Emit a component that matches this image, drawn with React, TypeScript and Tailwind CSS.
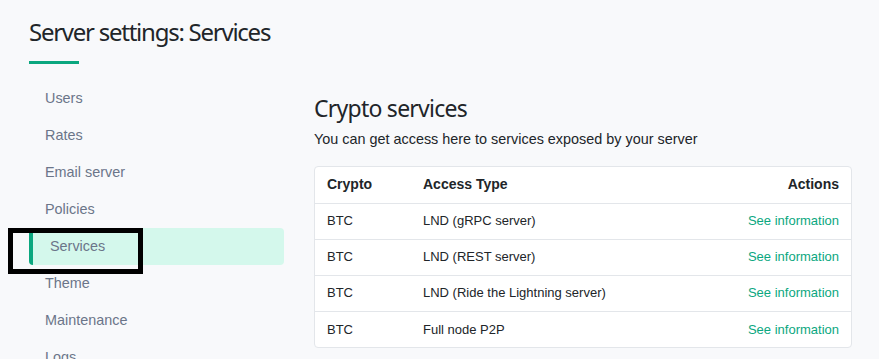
import React from 'react';

const navItems = ['Users', 'Rates', 'Email server', 'Policies', 'Services', 'Theme', 'Maintenance', 'Logs'];

const services = [
    { crypto: 'BTC', type: 'LND (gRPC server)' },
    { crypto: 'BTC', type: 'LND (REST server)' },
    { crypto: 'BTC', type: 'LND (Ride the Lightning server)' },
    { crypto: 'BTC', type: 'Full node P2P' },
];

const App: React.FC = () => {
    const active = 'Services';

    return (
        <div className="relative h-[359px] overflow-hidden bg-[#f8f9fb] pl-[29px] pr-[27px] font-['Liberation_Sans',Arial,sans-serif]">
            <header className="pt-[17px]">
                <h1 className="font-['Noto_Sans',sans-serif] text-[24px] leading-[30px] tracking-[-1.25px] text-[#212529]">Server settings: Services</h1>
                <div className="mt-[14px] h-[3px] w-[50px] bg-[#0ba77f]"></div>
            </header>

            <div className="mt-[16px] flex gap-[30px]">
                <nav className="w-[255px] shrink-0">
                    {navItems.map(item => (
                        item === active ? (
                            <div key={item} className="flex h-[37px] items-center rounded-[4px] border-l-4 border-[#0ba77f] bg-[#d4f8ec] pl-[17px] text-[14.4px] text-[#6b7589]">
                                {item}
                            </div>
                        ) : (
                            <div key={item} className="flex h-[37px] items-center pl-4 text-[14.4px] text-[#6b7589]">
                                {item}
                            </div>
                        )
                    ))}
                </nav>

                <main className="flex-1">
                    <h2 className="mt-[13px] font-['Noto_Sans',sans-serif] text-[23px] leading-[30px] tracking-[-0.75px] text-[#212529]">Crypto services</h2>
                    <p className="mt-[6px] text-[14.4px] leading-5 text-[#212529]">You can get access here to services exposed by your server</p>

                    <div className="mt-[17px] overflow-hidden rounded-[4px] border border-[#e3e6ea] bg-white">
                        <table className="w-full border-collapse text-[13px] text-[#212529]">
                            <thead>
                                <tr className="h-[36px] border-b border-[#e3e6ea] text-[14px] font-bold">
                                    <th className="w-[108px] pl-3 text-left">Crypto</th>
                                    <th className="text-left">Access Type</th>
                                    <th className="pr-3 text-right">Actions</th>
                                </tr>
                            </thead>
                            <tbody>
                                {services.map((s, i) => (
                                    <tr key={s.type} className={`h-[36px] ${i < services.length - 1 ? 'border-b border-[#e3e6ea]' : ''}`}>
                                        <td className="pl-3">{s.crypto}</td>
                                        <td>{s.type}</td>
                                        <td className="pr-3 text-right">
                                            <a href="#" className="text-[#0ba77f]">See information</a>
                                        </td>
                                    </tr>
                                ))}
                            </tbody>
                        </table>
                    </div>
                </main>
            </div>

            <div className="pointer-events-none absolute left-[8px] top-[228px] h-[46px] w-[135px] border-[5px] border-black"></div>
        </div>
    );
};

export default App;
